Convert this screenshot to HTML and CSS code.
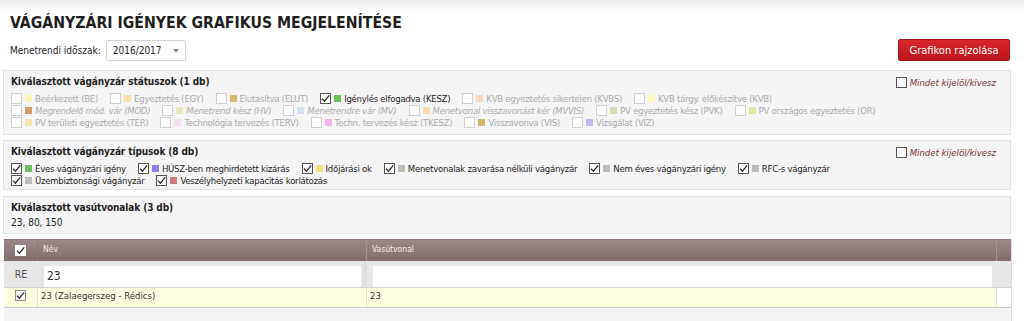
FILE: index.html
```html
<!DOCTYPE html>
<html lang="hu">
<head>
<meta charset="utf-8">
<title>Vágányzári igények grafikus megjelenítése</title>
<link rel="stylesheet" href="styles.css">
</head>
<body>
<div class="page">
  <h1 class="title">VÁGÁNYZÁRI IGÉNYEK GRAFIKUS MEGJELENÍTÉSE</h1>

  <div class="toolbar">
    <div class="period">
      <span class="period-label">Menetrendi időszak:</span>
      <div class="select"><span class="select-text">2016/2017</span><span class="caret"></span></div>
    </div>
    <button class="btn-draw" type="button">Grafikon rajzolása</button>
  </div>

  <section class="panel panel-status">
    <div class="panel-head">
      <h2 class="panel-title">Kiválasztott vágányzár státuszok (1 db)</h2>
      <label class="all"><span class="cb cb-dark"></span><i>Mindet kijelöl/kivesz</i></label>
    </div>
    <div class="row">
      <span class="item off"><span class="cb"></span><span class="sw sw-be"></span><span class="lbl">Beérkezett (BE)</span></span>
      <span class="item off"><span class="cb"></span><span class="sw sw-egy"></span><span class="lbl">Egyeztetés (EGY)</span></span>
      <span class="item off"><span class="cb"></span><span class="sw sw-elut"></span><span class="lbl">Elutasítva (ELUT)</span></span>
      <span class="item on"><span class="cb cb-on"><svg viewBox="0 0 11 11"><path d="M2 5.6 L4.4 8.2 L9.2 2.4"/></svg></span><span class="sw sw-kesz"></span><span class="lbl">Igénylés elfogadva (KESZ)</span></span>
      <span class="item off"><span class="cb"></span><span class="sw sw-kvbs"></span><span class="lbl">KVB egyeztetés sikertelen (KVBS)</span></span>
      <span class="item off"><span class="cb"></span><span class="sw sw-kvb"></span><span class="lbl">KVB tárgy. előkészítve (KVB)</span></span>
    </div>
    <div class="row">
      <span class="item off"><span class="cb"></span><span class="sw sw-mod"></span><span class="lbl it">Megrendelő mód. vár (MOD)</span></span>
      <span class="item off"><span class="cb"></span><span class="sw sw-hv"></span><span class="lbl it">Menetrend kész (HV)</span></span>
      <span class="item off"><span class="cb"></span><span class="sw sw-mv"></span><span class="lbl it">Menetrendre vár (MV)</span></span>
      <span class="item off"><span class="cb"></span><span class="sw sw-mvvis"></span><span class="lbl it">Menetvonal visszavonást kér (MVVIS)</span></span>
      <span class="item off"><span class="cb"></span><span class="sw sw-pvk"></span><span class="lbl">PV egyeztetés kész (PVK)</span></span>
      <span class="item off"><span class="cb"></span><span class="sw sw-or"></span><span class="lbl">PV országos egyeztetés (OR)</span></span>
    </div>
    <div class="row">
      <span class="item off"><span class="cb"></span><span class="sw sw-ter"></span><span class="lbl">PV területi egyeztetés (TER)</span></span>
      <span class="item off"><span class="cb"></span><span class="sw sw-terv"></span><span class="lbl">Technológia tervezés (TERV)</span></span>
      <span class="item off"><span class="cb"></span><span class="sw sw-tkesz"></span><span class="lbl">Techn. tervezés kész (TKESZ)</span></span>
      <span class="item off"><span class="cb"></span><span class="sw sw-vis"></span><span class="lbl">Visszavonva (VIS)</span></span>
      <span class="item off"><span class="cb"></span><span class="sw sw-viz"></span><span class="lbl">Vizsgálat (VIZ)</span></span>
    </div>
  </section>

  <section class="panel panel-types">
    <div class="panel-head">
      <h2 class="panel-title">Kiválasztott vágányzár típusok (8 db)</h2>
      <label class="all"><span class="cb cb-dark"></span><i>Mindet kijelöl/kivesz</i></label>
    </div>
    <div class="row">
      <span class="item on"><span class="cb cb-on"><svg viewBox="0 0 11 11"><path d="M2 5.6 L4.4 8.2 L9.2 2.4"/></svg></span><span class="sw sw-eves"></span><span class="lbl">Éves vágányzári igény</span></span>
      <span class="item on"><span class="cb cb-on"><svg viewBox="0 0 11 11"><path d="M2 5.6 L4.4 8.2 L9.2 2.4"/></svg></span><span class="sw sw-husz"></span><span class="lbl">HÚSZ-ben meghirdetett kizárás</span></span>
      <span class="item on"><span class="cb cb-on"><svg viewBox="0 0 11 11"><path d="M2 5.6 L4.4 8.2 L9.2 2.4"/></svg></span><span class="sw sw-ido"></span><span class="lbl">Időjárási ok</span></span>
      <span class="item on"><span class="cb cb-on"><svg viewBox="0 0 11 11"><path d="M2 5.6 L4.4 8.2 L9.2 2.4"/></svg></span><span class="sw sw-gray"></span><span class="lbl">Menetvonalak zavarása nélküli vágányzár</span></span>
      <span class="item on"><span class="cb cb-on"><svg viewBox="0 0 11 11"><path d="M2 5.6 L4.4 8.2 L9.2 2.4"/></svg></span><span class="sw sw-gray"></span><span class="lbl">Nem éves vágányzári igény</span></span>
      <span class="item on"><span class="cb cb-on"><svg viewBox="0 0 11 11"><path d="M2 5.6 L4.4 8.2 L9.2 2.4"/></svg></span><span class="sw sw-gray"></span><span class="lbl">RFC-s vágányzár</span></span>
    </div>
    <div class="row">
      <span class="item on"><span class="cb cb-on"><svg viewBox="0 0 11 11"><path d="M2 5.6 L4.4 8.2 L9.2 2.4"/></svg></span><span class="sw sw-gray"></span><span class="lbl">Üzembiztonsági vágányzár</span></span>
      <span class="item on"><span class="cb cb-on"><svg viewBox="0 0 11 11"><path d="M2 5.6 L4.4 8.2 L9.2 2.4"/></svg></span><span class="sw sw-vesz"></span><span class="lbl">Veszélyhelyzeti kapacitás korlátozás</span></span>
    </div>
  </section>

  <section class="panel panel-lines">
    <h2 class="panel-title">Kiválasztott vasútvonalak (3 db)</h2>
    <div class="lines-value">23, 80, 150</div>
  </section>

  <div class="grid">
    <div class="grid-head">
      <div class="gc gc-check"><span class="cb cb-head"><svg viewBox="0 0 11 11"><path d="M2 5.6 L4.4 8.2 L9.2 2.4"/></svg></span></div>
      <div class="gc gc-name">Név</div>
      <div class="gc gc-line">Vasútvonal</div>
      <div class="gc gc-pad"></div>
    </div>
    <div class="grid-filter">
      <div class="gf gf-check">RE</div>
      <div class="gf gf-name"><div class="input">23</div></div>
      <div class="gf gf-line"><div class="input"></div></div>
      <div class="gf gf-pad"></div>
    </div>
    <div class="grid-row">
      <div class="gr gr-check"><span class="cb cb-row"><svg viewBox="0 0 11 11"><path d="M2 5.6 L4.4 8.2 L9.2 2.4"/></svg></span></div>
      <div class="gr gr-name">23 (Zalaegerszeg - Rédics)</div>
      <div class="gr gr-line">23</div>
      <div class="gr gr-pad"></div>
    </div>
    <div class="grid-rest"></div>
  </div>
</div>
</body>
</html>
```

FILE: styles.css
```css
* { box-sizing: border-box; }

html, body {
  margin: 0;
  padding: 0;
}

body {
  background: #fff linear-gradient(#ececec 0, #ffffff 12px) no-repeat;
  font-family: "DejaVu Sans Condensed", "DejaVu Sans", sans-serif;
  font-size: 9.5px;
  color: #222;
  height: 321px;
  overflow: hidden;
}

.page {
  padding: 0 13px 0 3px;
}

.title {
  margin: 13px 0 0 7px;
  font-size: 15.7px;
  line-height: 19px;
  font-weight: bold;
  color: #1e1e1e;
}

.toolbar {
  margin-top: 7px;
  display: flex;
  justify-content: space-between;
  align-items: flex-start;
  height: 22px;
}

.period {
  display: flex;
  align-items: center;
  margin: 1px 0 0 7px;
  height: 21px;
}

.period-label {
  font-size: 10px;
  color: #222;
  margin-right: 5px;
}

.select {
  width: 80px;
  height: 21px;
  border: 1px solid #d2d2d2;
  border-radius: 2px;
  background: #fff;
  display: flex;
  align-items: center;
  justify-content: space-between;
  padding: 0 6px 0 6px;
}

.select-text {
  font-size: 10px;
  color: #222;
}

.caret {
  width: 0;
  height: 0;
  border-left: 3.5px solid transparent;
  border-right: 3.5px solid transparent;
  border-top: 4px solid #8a8a8a;
}

.btn-draw {
  width: 112px;
  height: 22px;
  border: 1px solid #a8141a;
  border-radius: 2px;
  background: linear-gradient(#d9262d, #b9161c);
  color: #fff;
  font-family: "DejaVu Sans Condensed", "DejaVu Sans", sans-serif;
  font-size: 11px;
  padding: 0;
  margin-right: 1px;
}

.panel {
  background: #f5f5f5;
  border: 1px solid #e2e2e2;
  padding: 4px 7px 0 7px;
}

.panel-status {
  margin-top: 9px;
  height: 65px;
}

.panel-types {
  margin-top: 5px;
  height: 50px;
}

.panel-lines {
  margin-top: 6px;
  height: 38px;
}

.panel-head {
  display: flex;
  justify-content: space-between;
  align-items: flex-start;
  height: 14px;
  margin-bottom: 3px;
}

.panel-title {
  margin: 0;
  font-size: 10px;
  line-height: 14px;
  font-weight: bold;
  letter-spacing: -0.1px;
  color: #1e1e1e;
}

.all {
  display: flex;
  align-items: center;
  height: 14px;
  margin-right: 7px;
  color: #7d3434;
}

.all i {
  margin-left: 3px;
  font-size: 9.5px;
}

.row {
  display: flex;
  align-items: center;
  height: 12.3px;
  white-space: nowrap;
}

.item {
  display: inline-flex;
  align-items: center;
  margin-right: 12px;
}

.lbl { letter-spacing: -0.25px; }
.off .lbl { color: #ababab; }
.on .lbl { color: #1e1e1e; }
.lbl.it { font-style: italic; }

.cb {
  display: inline-block;
  flex: none;
  width: 11px;
  height: 11px;
  border: 1px solid #cfcfcf;
  background: #fff;
  position: relative;
}

.cb svg {
  position: absolute;
  left: -1px;
  top: -1px;
  width: 11px;
  height: 11px;
}

.cb svg path {
  fill: none;
  stroke: #2a2a2a;
  stroke-width: 1.3;
}

.cb-dark, .cb-on {
  border-color: #555;
}

.sw {
  display: inline-block;
  flex: none;
  width: 7px;
  height: 7px;
  margin: 0 3px 0 3px;
}

.sw-be { background: #fbf3b8; }
.sw-egy { background: #f8dfa6; }
.sw-elut { background: #d9bb72; }
.sw-kesz { background: #6cc15a; }
.sw-kvbs { background: #fad7bd; }
.sw-kvb { background: #fbf8c4; }
.sw-mod { background: #d9976a; }
.sw-hv { background: #e8e6bd; }
.sw-mv { background: #d6e2f1; }
.sw-mvvis { background: #fbd8b6; }
.sw-pvk { background: #d7dcb6; }
.sw-or { background: #dde8a2; }
.sw-ter { background: #f5e7ab; }
.sw-terv { background: #f4dcf2; }
.sw-tkesz { background: #f2b4ea; }
.sw-vis { background: #d2b36b; }
.sw-viz { background: #c4bcf4; }

.sw-eves { background: #6cbf5f; }
.sw-husz { background: #8c83e2; }
.sw-ido { background: #f3e27c; }
.sw-gray { background: #bdbdbd; }
.sw-vesz { background: #cf7b7d; }

.lines-value {
  font-size: 10px;
  line-height: 14px;
  margin-top: 1px;
  color: #222;
}

.grid {
  margin: 5px -1px 0 1px;
  border-right: 1px solid #dcdcdc;
  background: #f3f3f3;
  height: 82px;
}

.grid-head,
.grid-filter,
.grid-row {
  display: grid;
  grid-template-columns: 34px 329px 630px 1fr;
}

.grid-head {
  height: 22px;
  background: linear-gradient(#9c8886, #826d6b);
  border-top: 1px solid #8f7a78;
}

.gc {
  color: #f4ecec;
  font-size: 8.5px;
  padding: 4px 0 0 5px;
  border-right: 1px solid #a59391;
}

.gc-check {
  padding: 0;
  display: flex;
  align-items: center;
  justify-content: center;
  border-right-color: #907b79;
}

.gc-pad { border-right: none; }

.cb-head {
  border-color: #fff;
  background: #fff;
}

.grid-filter {
  height: 26px;
  background: #e7e7e7;
}

.gf {
  border-right: 4px solid #dedede;
}

.gf-check {
  display: flex;
  align-items: center;
  justify-content: center;
  font-size: 10.5px;
  color: #555;
  border-right: none;
}

.gf-name, .gf-line {
  padding: 4px 1px 0 5px;
}

.gf-line { border-right: none; }
.gf-pad { border-right: none; }

.input {
  height: 22px;
  background: #fff;
  border: 1px solid #e6e6e6;
  border-bottom: none;
  font-size: 12px;
  line-height: 20px;
  padding-left: 3px;
  color: #333;
}

.gf-line .input { margin-right: 3px; }

.grid-row {
  height: 21px;
  background: #fefee1;
  border-top: 1px solid #d4d4d4;
  border-bottom: 1px solid #cfcfcf;
}

.gr {
  font-size: 9.5px;
  color: #333;
  padding: 2px 0 0 3px;
  border-right: 1px solid #e4e4d0;
}

.gr-check {
  display: flex;
  align-items: flex-start;
  justify-content: center;
  padding: 2px 0 0 0;
}

.gr-pad {
  background: #fff;
  border-right: none;
}

.cb-row {
  border-color: #8a8a8a;
}
```
